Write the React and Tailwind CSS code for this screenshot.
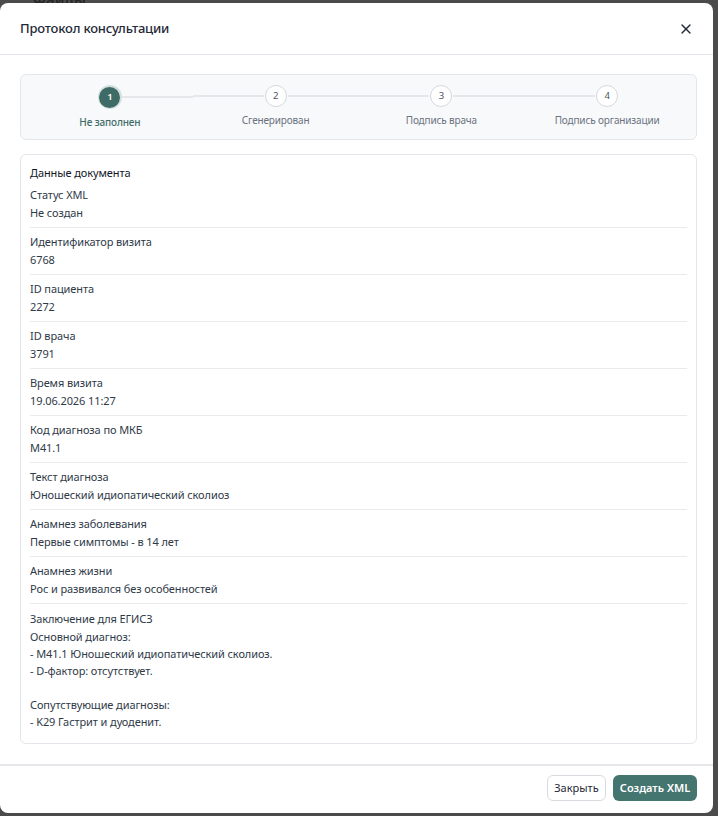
import React from "react";
import { X } from "lucide-react";

const steps = [
  { n: 1, label: "Не заполнен", active: true },
  { n: 2, label: "Сгенерирован" },
  { n: 3, label: "Подпись врача" },
  { n: 4, label: "Подпись организации" },
];

const rows = [
  ["Статус XML", "Не создан"],
  ["Идентификатор визита", "6768"],
  ["ID пациента", "2272"],
  ["ID врача", "3791"],
  ["Время визита", "19.06.2026 11:27"],
  ["Код диагноза по МКБ", "M41.1"],
  ["Текст диагноза", "Юношеский идиопатический сколиоз"],
  ["Анамнез заболевания", "Первые симптомы - в 14 лет"],
  ["Анамнез жизни", "Рос и развивался без особенностей"],
];

const conclusion = [
  "Основной диагноз:",
  "- M41.1 Юношеский идиопатический сколиоз.",
  "- D-фактор: отсутствует.",
  "",
  "Сопутствующие диагнозы:",
  "- K29 Гастрит и дуоденит.",
];

export default function App() {
  return (
    <div
      className="relative w-[718px] h-[816px] overflow-hidden bg-[#4b4b4b]"
      style={{ fontFamily: '"Noto Sans", "Open Sans", sans-serif' }}
    >
      <div className="absolute left-[33px] top-[-12px] text-[15px] font-semibold text-[#262626]">Файлы</div>
      <div className="absolute left-[316px] top-[811px] text-[13px] tracking-wide text-[#262626]">ОФОРМЛЕНИЕ</div>

      <div className="absolute left-0 top-[3px] w-[713px] h-[810px] bg-white rounded-lg flex flex-col">
        <div className="h-[52px] shrink-0 flex items-center justify-between pl-5 pr-[19px] border-b border-[#e3e6ea]">
          <div className="text-[13px] tracking-[-0.2px] font-medium text-[#1f2937]">Протокол консультации</div>
          <X size={16} strokeWidth={2} className="text-[#1f2937]" />
        </div>

        <div className="flex-1 flex flex-col pl-5 pr-4 pt-[19px] pb-5 gap-[14px]">
          <div className="h-[66px] shrink-0 rounded-md border border-[#e3e6ea] bg-[#f8f9fb] px-[6px] pt-[10px] grid grid-cols-4">
            {steps.map((s, i) => (
              <div key={s.n} className="flex flex-col items-center">
                <div className="w-full flex items-center">
                  <div className={`flex-1 h-[2px] ${i === 0 ? "" : "bg-[#e5e7eb]"}`} />
                  {s.active ? (
                    <div className="w-[24px] h-[24px] rounded-full bg-[#d3e0de] flex items-center justify-center">
                      <div className="w-[21px] h-[21px] rounded-full bg-[#3f6b66] flex items-center justify-center text-[9.5px] font-semibold text-white">
                        {s.n}
                      </div>
                    </div>
                  ) : (
                    <div className="w-[22px] h-[22px] mx-[1px] rounded-full bg-white border border-[#d5d8dd] flex items-center justify-center text-[9.5px] text-[#4b5563]">
                      {s.n}
                    </div>
                  )}
                  <div className={`flex-1 h-[2px] ${i === 3 ? "" : "bg-[#e5e7eb]"}`} />
                </div>
                <div
                  className={`mt-[6px] text-[10px] tracking-[-0.15px] leading-[14px] ${
                    s.active ? "text-[#3f6b66] font-medium" : "text-[#6b7280]"
                  }`}
                >
                  {s.label}
                </div>
              </div>
            ))}
          </div>

          <div className="flex-1 rounded-md border border-[#e3e6ea] px-[9px] pt-[9px] pb-[6px] text-[11px] tracking-[-0.1px] text-[#2f3a48]">
            <div className="leading-[17px] text-[#111827]">Данные документа</div>
            {rows.map(([l, v]) => (
              <div key={l} className="pt-[5px] pb-[6px] border-b border-[#e9ebee]">
                <div className="leading-[17px] text-[#2f3a48]">{l}</div>
                <div className="leading-[17px] mt-[1px] text-[#2f3a48]">{v}</div>
              </div>
            ))}
            <div className="pt-[6px]">
              <div className="leading-[17px]">Заключение для ЕГИСЗ</div>
              <div className="mt-[1px]">
                {conclusion.map((c, i) => (
                  <div key={i} className="leading-[17px] h-[17px]">{c}</div>
                ))}
              </div>
            </div>
          </div>
        </div>

        <div className="shrink-0 h-[49px] border-t-2 border-[#e5e7eb] flex items-start justify-end gap-[7px] pt-[9px] pr-[16px]">
          <button className="h-[26px] w-[59px] rounded-md border border-[#d7dbe0] bg-white text-[11px] text-[#1f2937]">
            Закрыть
          </button>
          <button className="h-[26px] w-[84px] rounded-md bg-[#45756f] text-[11px] font-semibold text-white">
            Создать XML
          </button>
        </div>
      </div>
    </div>
  );
}
